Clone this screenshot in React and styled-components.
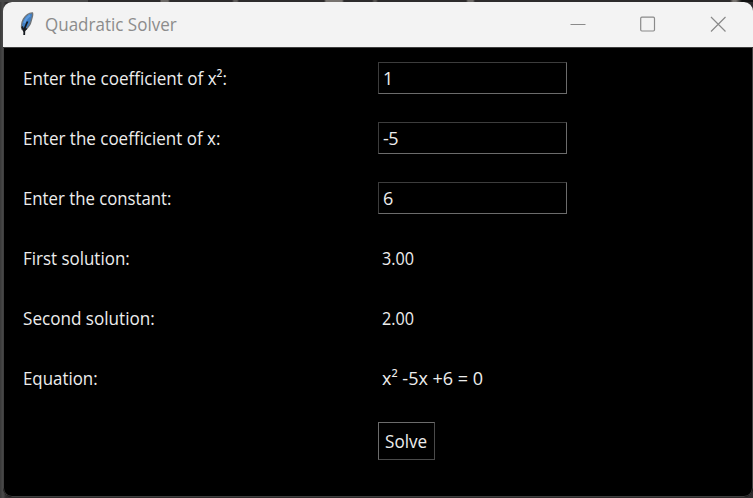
import React, { useState } from "react";
import styled, { createGlobalStyle } from "styled-components";

const GlobalStyle = createGlobalStyle`
  * { box-sizing: border-box; }
  body { margin: 0; overflow: hidden; background: #333; }
`;

const Desktop = styled.div`
  width: 753px;
  height: 498px;
  padding: 2px 0 1px 3px;
  background:
    linear-gradient(90deg, #484848 0 88px, #2d2b2c 88px 160px, #6c6966 161px 168px, #2d2b2c 170px 232px,
      #5d5a58 234px 237px, #2d2b2c 239px 324px, #77736f 326px 342px, #2d2b2c 344px 372px, #55524f 374px 376px,
      #2d2b2c 378px 466px, #6c6966 468px 473px, #2d2b2c 475px 730px, #77736f 733px 736px, #111 742px) 0 0 / 100% 2px no-repeat,
    linear-gradient(90deg, #383838 0, #4a4a4a 3px, #2d2b2c 6px, #2d2b2c 100%);
  font-family: "Open Sans", "Noto Sans", sans-serif;
`;

const Window = styled.main`
  display: flex;
  flex-direction: column;
  height: 495px;
  border-radius: 9px;
  overflow: hidden;
  background: #000;
`;

const TitleBar = styled.header`
  display: flex;
  align-items: center;
  flex: 0 0 45px;
  padding: 0 0 2px 16px;
  background: #f3f3f3;
`;

const Title = styled.h1`
  flex: 1;
  margin: 0 0 0 9px;
  font-size: 18px;
  line-height: 24px;
  font-weight: 400;
  color: #8c8c8c;
`;

const Squeeze = styled.span`
  display: inline-block;
  white-space: pre;
  transform: scaleX(${(p) => p.$x});
  transform-origin: 0 50%;
`;

const Controls = styled.div`
  display: flex;
  gap: 54px;
  padding-right: 27px;
`;

const ControlIcon = styled.svg`
  display: block;
  width: 16px;
  height: 16px;
  fill: none;
  stroke: #8a8a8a;
  stroke-width: 1.2;
`;

const Form = styled.div`
  flex: 1;
  display: grid;
  grid-template-columns: 355.5px 1fr;
  grid-auto-rows: 32px;
  row-gap: 28px;
  padding: 14px 0 0 18.5px;
  border: 1px solid #3f3f3f;
  border-radius: 0 0 9px 9px;
  align-items: center;
  align-content: start;
  justify-items: start;
  font-size: 18px;
  line-height: 24px;
  color: #ededed;
`;

const Label = styled.label`
  padding-bottom: 1px;
`;

const Entry = styled.input`
  width: 189px;
  height: 32px;
  padding: 0 0 1px 4px;
  border: 1px solid;
  border-color: #3c3c3c #6b6b6b #6b6b6b #3c3c3c;
  border-radius: 0;
  outline: 0;
  background: #000;
  color: #ededed;
  font: inherit;
  letter-spacing: -0.5px;
`;

const Result = styled.output`
  padding: 0 0 1px 4px;
`;

const SolveButton = styled.button`
  grid-column: 2;
  align-self: start;
  width: 57px;
  height: 38px;
  padding: 0 0 1px 6px;
  border: 1px solid;
  border-color: #6b6b6b #4a4a4a #4a4a4a #6b6b6b;
  background: #000;
  color: #ededed;
  font: inherit;
  text-align: left;
`;

const FeatherSvg = styled.svg`
  display: block;
  width: 17px;
  height: 24px;
`;

function Feather() {
  return (
    <FeatherSvg viewBox="0 0 17 24">
      <path d="M13.4 0.9 C10.8 0.8 6.8 3.2 4.4 7.2 C2.5 10.6 2.2 14 2.9 17 L5.2 18.8 C8.6 16.4 11.4 13 12.3 8.4 C12.9 5.5 14.4 3 13.4 0.9Z" fill="#3f7fc4" stroke="#707478" strokeWidth="1.4" />
      <path d="M11.2 3.2 C9 4.5 6.6 7.4 5.2 11" fill="none" stroke="#5c9ade" strokeWidth="2.2" />
      <path d="M8.6 9.5 L7 13 L5.4 17 L5.2 23" fill="none" stroke="#15191e" strokeWidth="1.8" />
      <path d="M3 14.5 L5 18.8 L7.6 16.4" fill="none" stroke="#191c20" strokeWidth="1.8" />
    </FeatherSvg>
  );
}

const fields = [
  { id: "a", label: "Enter the coefficient of x²:", x: 0.947 },
  { id: "b", label: "Enter the coefficient of x:", x: 0.944 },
  { id: "c", label: "Enter the constant:", x: 0.931 },
];

const results = [
  { label: "First solution:", x: 0.941, value: "3.00", vx: 0.9 },
  { label: "Second solution:", x: 0.95, value: "2.00", vx: 0.9 },
  { label: "Equation:", x: 0.937, value: "x² -5x +6 = 0", vx: 1 },
];

export default function App() {
  const [values, setValues] = useState({ a: "1", b: "-5", c: "6" });
  return (
    <>
      <GlobalStyle />
      <Desktop>
        <Window>
          <TitleBar>
            <Feather />
            <Title><Squeeze $x={0.945}>Quadratic Solver</Squeeze></Title>
            <Controls>
              <ControlIcon><path d="M0.5 8.5H15.5" /></ControlIcon>
              <ControlIcon><rect x="0.7" y="1.2" width="13.8" height="13.8" rx="1.2" /></ControlIcon>
              <ControlIcon><path d="M1 1L15.5 15.5M15.5 1L1 15.5" /></ControlIcon>
            </Controls>
          </TitleBar>
          <Form>
            {fields.map((f) => (
              <React.Fragment key={f.id}>
                <Label htmlFor={f.id}><Squeeze $x={f.x}>{f.label}</Squeeze></Label>
                <Entry
                  id={f.id}
                  value={values[f.id]}
                  onChange={(e) => setValues({ ...values, [f.id]: e.target.value })}
                />
              </React.Fragment>
            ))}
            {results.map((r) => (
              <React.Fragment key={r.label}>
                <Label as="span"><Squeeze $x={r.x}>{r.label}</Squeeze></Label>
                <Result><Squeeze $x={r.vx}>{r.value}</Squeeze></Result>
              </React.Fragment>
            ))}
            <SolveButton type="button"><Squeeze $x={0.95}>Solve</Squeeze></SolveButton>
          </Form>
        </Window>
      </Desktop>
    </>
  );
}
